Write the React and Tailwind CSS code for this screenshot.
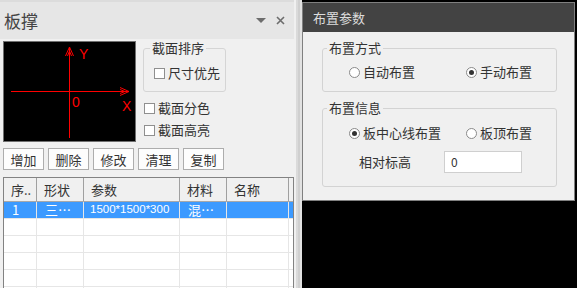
import React from 'react';

const font = { fontFamily: '"Noto Sans CJK SC", "Noto Sans", sans-serif' };

const CheckBox = ({ label }) => (
  <label className="flex items-center gap-[3px] text-[13px] leading-[14px] text-[#333]">
    <span className="w-[11px] h-[11px] border border-[#8f8f8f] bg-white" />
    {label}
  </label>
);

const Radio = ({ label, checked }) => (
  <label className="flex items-center gap-[3px] text-[13px] leading-[14px] text-[#333]">
    <span className="w-[11px] h-[11px] rounded-full border border-[#8a8a8a] bg-white flex items-center justify-center">
      {checked && <span className="w-[5px] h-[5px] rounded-full bg-[#333]" />}
    </span>
    {label}
  </label>
);

const Axes = () => (
  <svg width="131" height="99" viewBox="0 0 131 99">
    <g stroke="#ff0000" strokeWidth="1" fill="none" shapeRendering="crispEdges">
      <line x1="65.5" y1="5" x2="65.5" y2="96" />
      <line x1="7" y1="49.5" x2="125" y2="49.5" />
    </g>
    <g stroke="#ff0000" strokeWidth="1" fill="none">
      <polyline points="61.5,14 65.5,5 69.5,14" />
      <polyline points="63.5,14 65.5,9 67.5,14" />
      <polyline points="116,45.5 125,49.5 116,53.5" />
      <polyline points="116,47.5 121,49.5 116,51.5" />
    </g>
    <g fill="#ff0000" fontFamily="Liberation Sans, sans-serif" fontSize="14">
      <text x="75" y="17">Y</text>
      <text x="68" y="65">0</text>
      <text x="118" y="69">X</text>
    </g>
  </svg>
);

const cols = [
  { name: '序..', w: 'w-[33px]' },
  { name: '形状', w: 'w-[47px]' },
  { name: '参数', w: 'w-[96px]' },
  { name: '材料', w: 'w-[47px]' },
  { name: '名称', w: 'w-[62px]' },
];

const row1 = ['1', '三…', '1500*1500*300', '混…', ''];

export default function App() {
  return (
    <div className="w-[577px] h-[288px] flex bg-black overflow-hidden" style={font}>
      {/* left dock panel */}
      <div className="w-[294px] h-full flex flex-col bg-[#f0f0f0]">
        <div className="h-[39px] shrink-0 bg-[#e6e6e6] border-t-2 border-[#dcdcdc] flex items-center pl-[4px] pr-[9px]">
          <span className="text-[17px] text-[#444] leading-none">板撑</span>
          <div className="ml-auto flex items-center gap-[10px]">
            <svg width="10" height="6" viewBox="0 0 10 6">
              <polygon points="0,0 10,0 5,5" fill="#6d6d6d" />
            </svg>
            <svg width="9" height="9" viewBox="0 0 9 9">
              <path d="M1 1 L8 8 M8 1 L1 8" stroke="#6d6d6d" strokeWidth="1.6" />
            </svg>
          </div>
        </div>

        <div className="pl-[3px] pt-[2px] flex gap-[7px]">
          <div className="w-[133px] h-[101px] bg-black border border-[#707070]">
            <Axes />
          </div>
          <div className="flex flex-col">
            <fieldset className="w-[83px] h-[51px] border border-[#d5d5d5] rounded-[3px]">
              <legend className="ml-[6px] px-[2px] text-[13px] leading-[14px] text-[#333]">截面排序</legend>
              <div className="pl-[10px] pt-[11px]">
                <CheckBox label="尺寸优先" />
              </div>
            </fieldset>
            <div className="pl-[1px] pt-[9px] flex flex-col gap-[8px]">
              <CheckBox label="截面分色" />
              <CheckBox label="截面高亮" />
            </div>
          </div>
        </div>

        <div className="pl-[3px] mt-[6px] flex gap-[4px]">
          {['增加', '删除', '修改', '清理', '复制'].map((b) => (
            <button key={b} className="w-[41px] h-[22px] border border-[#adadad] bg-[#fdfdfd] text-[13px] text-[#333] leading-none">
              {b}
            </button>
          ))}
        </div>

        <div className="ml-[3px] mt-[7px] flex-1 border border-[#828282] bg-white flex flex-col">
          <div className="flex h-[24px] border-b border-[#a8a8a8] bg-[#f0f0f0]">
            {cols.map((c) => (
              <div key={c.name} className={`${c.w} h-full border-r border-[#a0a0a0] pl-[7px] flex items-center text-[13px] text-[#333]`}>
                {c.name}
              </div>
            ))}
          </div>
          <div className="flex h-[17px] bg-[#3c9aff] border-b border-[#e6e6e6]">
            {cols.map((c, i) => (
              <div
                key={c.name}
                className={`${c.w} h-full border-r border-[#e6e6e6] flex items-center text-white ${i === 2 ? "pl-[6px] text-[11.5px] font-['Liberation_Sans']" : 'pl-[8px] text-[13px]'}`}
              >
                {row1[i]}
              </div>
            ))}
          </div>
          {[0, 1, 2, 3, 4].map((r) => (
            <div key={r} className="flex h-[17px] border-b border-[#e6e6e6]">
              {cols.map((c) => (
                <div key={c.name} className={`${c.w} h-full border-r border-[#e6e6e6]`} />
              ))}
            </div>
          ))}
        </div>
      </div>

      {/* splitter */}
      <div className="w-[8px] h-full flex">
        <div className="w-[2px] bg-[#f0f0f0]" />
        <div className="w-[2px] bg-[#dadada]" />
        <div className="w-[2px] bg-[#cfcfcf]" />
        <div className="w-[2px] bg-[#e2e2e2]" />
      </div>

      {/* right area */}
      <div className="flex-1 h-full bg-black">
        <div className="w-[273px] mt-[2px] border border-[#808080] bg-[#f0f0f0]">
          <div className="h-[29px] bg-[#434343] flex items-center pl-[10px] text-[13px] text-[#dcdcdc]">布置参数</div>
          <div className="pl-[19px] pt-[9px] pb-[13px] flex flex-col gap-[9px]">
            <fieldset className="w-[235px] h-[51px] border border-[#d3d3d3] rounded-[3px]">
              <legend className="ml-[4px] px-[2px] text-[13px] leading-[14px] text-[#333]">布置方式</legend>
              <div className="flex pl-[26px] pt-[10px]">
                <div className="w-[117px]"><Radio label="自动布置" /></div>
                <Radio label="手动布置" checked />
              </div>
            </fieldset>
            <fieldset className="w-[235px] h-[86px] border border-[#d3d3d3] rounded-[3px]">
              <legend className="ml-[4px] px-[2px] text-[13px] leading-[14px] text-[#333]">布置信息</legend>
              <div className="flex pl-[26px] pt-[11px]">
                <div className="w-[117px]"><Radio label="板中心线布置" checked /></div>
                <Radio label="板顶布置" />
              </div>
              <div className="flex items-center pl-[36px] mt-[11px]">
                <span className="w-[85px] text-[13px] text-[#333]">相对标高</span>
                <div className="w-[78px] h-[22px] border border-[#cfcfcf] bg-white pl-[6px] flex items-center text-[12px] text-[#333]">0</div>
              </div>
            </fieldset>
          </div>
        </div>
      </div>
    </div>
  );
}
